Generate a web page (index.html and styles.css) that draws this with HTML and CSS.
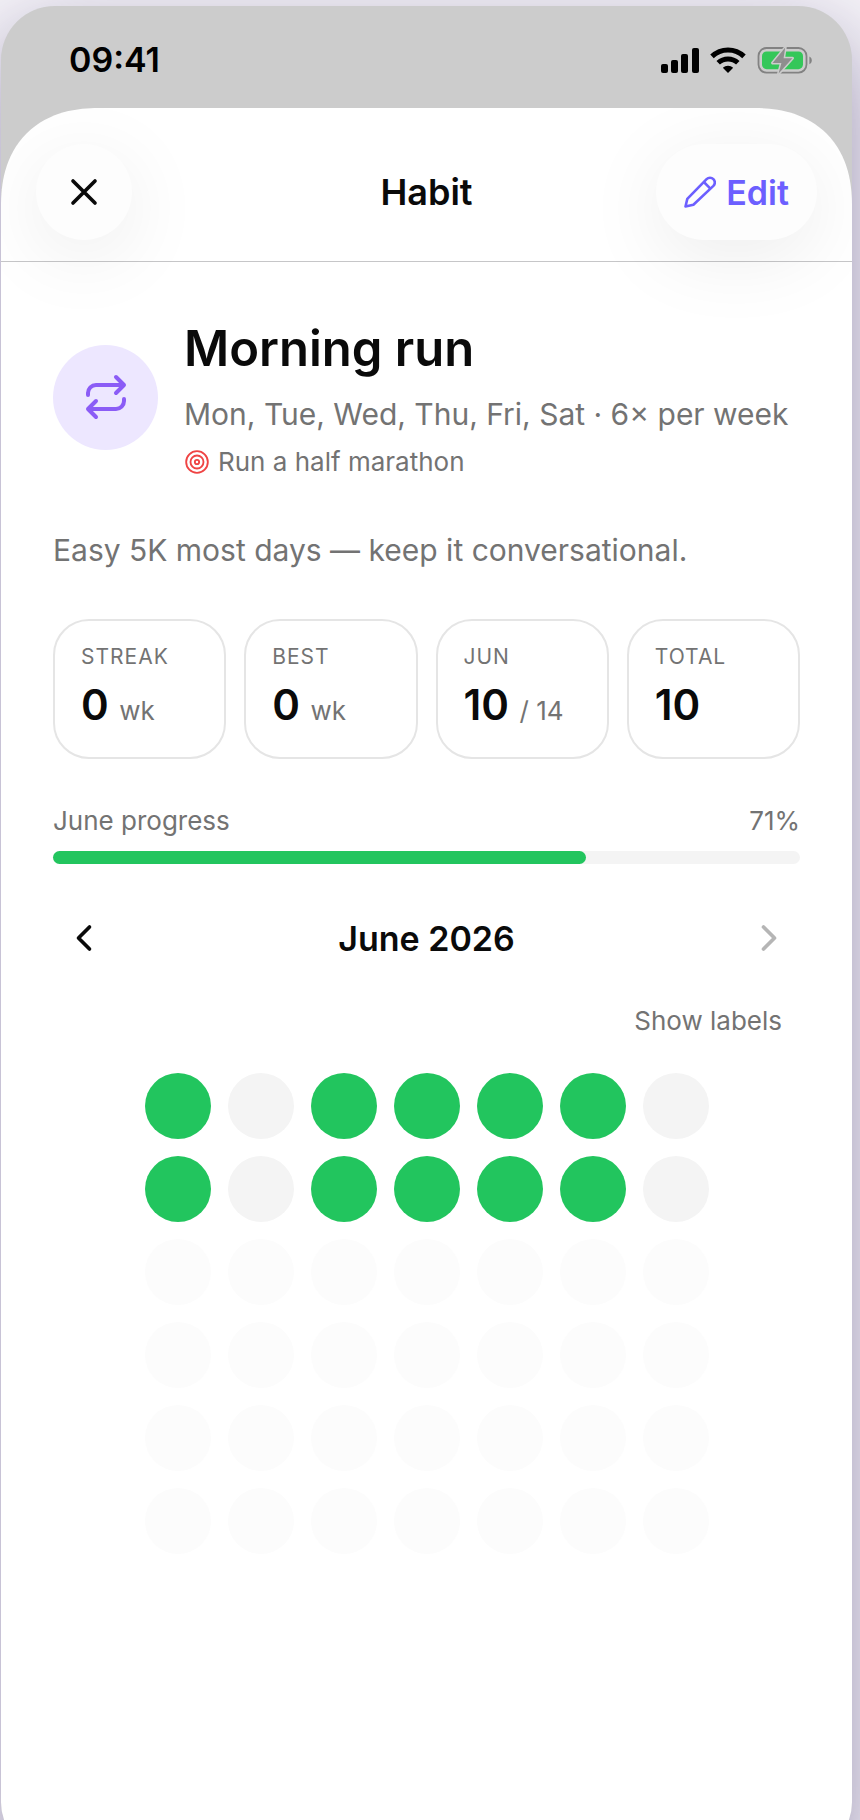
FILE: index.html
```
<!DOCTYPE html>
<html lang="en">
<head>
    <meta charset="UTF-8">
    <meta name="viewport" content="width=device-width, initial-scale=1.0">
    <title>Habit</title>
    <link rel="stylesheet" href="styles.css">
</head>
<body>
    <div class="phone">
        <div class="status-bar">
            <span class="time">09:41</span>
            <div class="status-icons">
                <svg width="38" height="26" viewBox="0 0 38 26" fill="#000">
                    <rect x="0" y="17" width="7" height="9" rx="2"/>
                    <rect x="10" y="13" width="7" height="13" rx="2"/>
                    <rect x="20" y="7" width="7" height="19" rx="2"/>
                    <rect x="31" y="1" width="7" height="25" rx="2"/>
                </svg>
                <svg width="36" height="26" viewBox="0 0 36 26" fill="none" stroke="#000" stroke-width="5">
                    <path d="M2 9.4a23 23 0 0 1 32 0"/>
                    <path d="M8.2 15.8a14.2 14.2 0 0 1 19.6 0"/>
                    <path d="M18 26l-5.2-5.2a7.4 7.4 0 0 1 10.4 0z" fill="#000" stroke="none"/>
                </svg>
                <svg width="56" height="28" viewBox="0 0 56 28">
                    <rect x="1.5" y="2" width="48" height="24.6" rx="8" fill="none" stroke="#828282" stroke-width="1.8"/>
                    <rect x="5" y="5.4" width="41" height="17.8" rx="4.6" fill="#34c759"/>
                    <path d="M52.4 10.5c3.2 1.4 3.2 6.4 0 7.8z" fill="#828282"/>
                    <path d="M28.2 1.6L15.6 17h8.8l-2.8 10.6L35.4 12.2h-8.8z" fill="#8e8e8e" stroke="#ccc" stroke-width="3" stroke-linejoin="round" paint-order="stroke"/>
                </svg>
            </div>
        </div>

        <main class="sheet">
            <header class="header">
                <button class="round-btn close" aria-label="Close">
                    <svg class="icon" viewBox="0 0 24 24"><path d="M18 6 6 18M6 6l12 12"/></svg>
                </button>
                <h1 class="header-title">Habit</h1>
                <button class="round-btn edit">
                    <svg width="32" height="32" viewBox="0 0 32 32" fill="none" stroke="currentColor" stroke-width="2.6" stroke-linejoin="round">
                        <path d="M1.5 30.5 3.3 22.9 22.6 3.1a4.8 4.8 0 0 1 6.8 0a4.8 4.8 0 0 1 0 6.8L9.4 28.8z"/>
                        <path d="M19.8 6l6.6 6.6"/>
                    </svg>
                    <span>Edit</span>
                </button>
            </header>

            <div class="content">
                <section class="habit">
                    <div class="habit-icon">
                        <svg width="48" height="48" viewBox="0 0 24 24">
                            <path d="m17 2 4 4-4 4M3 11v-1a4 4 0 0 1 4-4h14M7 22l-4-4 4-4M21 13v1a4 4 0 0 1-4 4H3"/>
                        </svg>
                    </div>
                    <div class="habit-info">
                        <h2>Morning run</h2>
                        <p class="schedule">Mon, Tue, Wed, Thu, Fri, Sat · 6× per week</p>
                        <p class="goal">
                            <svg width="26" height="26" viewBox="0 0 24 24">
                                <circle cx="12" cy="12" r="10"/>
                                <circle cx="12" cy="12" r="6"/>
                                <circle cx="12" cy="12" r="2"/>
                            </svg>
                            <span>Run a half marathon</span>
                        </p>
                    </div>
                </section>

                <p class="note">Easy 5K most days — keep it conversational.</p>

                <section class="stats">
                    <div class="stat">
                        <div class="stat-label">Streak</div>
                        <div class="stat-value">0 <small>wk</small></div>
                    </div>
                    <div class="stat">
                        <div class="stat-label">Best</div>
                        <div class="stat-value">0 <small>wk</small></div>
                    </div>
                    <div class="stat">
                        <div class="stat-label">Jun</div>
                        <div class="stat-value">10 <small>/ 14</small></div>
                    </div>
                    <div class="stat">
                        <div class="stat-label">Total</div>
                        <div class="stat-value">10</div>
                    </div>
                </section>

                <section class="progress">
                    <div class="progress-text">
                        <span id="progress-label">June progress</span>
                        <span>71%</span>
                    </div>
                    <div class="bar" role="progressbar" aria-labelledby="progress-label" aria-valuenow="71" aria-valuemin="0" aria-valuemax="100">
                        <div class="bar-fill" style="width: 71.4%"></div>
                    </div>
                </section>

                <nav class="month">
                    <button class="month-btn" aria-label="Previous month">
                        <svg class="icon" viewBox="0 0 24 24"><path d="m15 18-6-6 6-6"/></svg>
                    </button>
                    <h3>June 2026</h3>
                    <button class="month-btn" aria-label="Next month" disabled>
                        <svg class="icon" viewBox="0 0 24 24"><path d="m9 18 6-6-6-6"/></svg>
                    </button>
                </nav>

                <button class="labels-btn">Show labels</button>

                <div class="days">
                    <i class="day done"></i><i class="day"></i><i class="day done"></i><i class="day done"></i><i class="day done"></i><i class="day done"></i><i class="day"></i>
                    <i class="day done"></i><i class="day"></i><i class="day done"></i><i class="day done"></i><i class="day done"></i><i class="day done"></i><i class="day"></i>
                    <i class="day future"></i><i class="day future"></i><i class="day future"></i><i class="day future"></i><i class="day future"></i><i class="day future"></i><i class="day future"></i>
                    <i class="day future"></i><i class="day future"></i><i class="day future"></i><i class="day future"></i><i class="day future"></i><i class="day future"></i><i class="day future"></i>
                    <i class="day future"></i><i class="day future"></i><i class="day future"></i><i class="day future"></i><i class="day future"></i><i class="day future"></i><i class="day future"></i>
                    <i class="day future"></i><i class="day future"></i><i class="day future"></i><i class="day future"></i><i class="day future"></i><i class="day future"></i><i class="day future"></i>
                </div>
            </div>
        </main>
    </div>
</body>
</html>
```
FILE: styles.css
```
*,
*::before,
*::after {
    box-sizing: border-box;
}
body {
    height: 100vh;
    margin: 0;
    padding: 6px 8px 0 1px;
    overflow: hidden;
    background-color: #f4f2f7;
    color: #0a0a0a;
    font-family: Inter, "Liberation Sans", sans-serif;
}
h1, h2, h3, p {
    margin: 0;
}
button {
    padding: 0;
    border: none;
    background: none;
    color: inherit;
    font: inherit;
    cursor: pointer;
}
svg {
    display: block;
    flex: none;
}
.icon {
    width: 44px;
    height: 44px;
    fill: none;
    stroke: currentColor;
    stroke-width: 2;
    stroke-linecap: round;
    stroke-linejoin: round;
}
.phone {
    display: flex;
    flex-direction: column;
    min-height: calc(100vh + 30px);
    border-radius: 54px;
    overflow: hidden;
    background-color: #ccc;
    box-shadow: 0 30px 80px rgba(50, 35, 100, 0.45);
}

/* Status bar */
.status-bar {
    display: flex;
    justify-content: space-between;
    align-items: center;
    height: 102px;
    padding: 5px 39px 0 68px;
}
.time {
    color: #000;
    font-size: 34px;
    font-weight: 600;
}
.status-icons {
    display: flex;
    align-items: center;
    gap: 11px;
}

/* Sheet */
.sheet {
    flex: 1;
    border-radius: 86px 86px 0 0;
    overflow: hidden;
    background-color: #fff;
}
@supports (corner-shape: superellipse(1.2)) {
    .sheet {
        border-radius: 98px 98px 0 0;
        corner-shape: superellipse(1.2);
    }
}
.header {
    display: grid;
    grid-template-columns: 1fr auto 1fr;
    align-items: center;
    padding: 36px 35px 21px;
    border-bottom: 1px solid #c6c6c8;
}
.header-title {
    font-size: 36px;
    font-weight: 600;
}
.round-btn {
    display: flex;
    align-items: center;
    justify-content: center;
    height: 96px;
    border-radius: 48px;
    background-color: #fdfdfd;
    box-shadow: 0 16px 80px rgba(0, 0, 0, 0.08);
}
.close {
    width: 96px;
}
.edit {
    justify-self: end;
    gap: 10px;
    padding: 0 28px;
    color: #6c5fff;
    font-size: 34px;
    font-weight: 600;
}
.content {
    padding: 54px 52px;
    color: #737373;
}

/* Habit summary */
.habit {
    display: flex;
    align-items: center;
    gap: 26px;
}
.habit-icon {
    display: flex;
    flex: none;
    align-items: center;
    justify-content: center;
    width: 105px;
    height: 105px;
    border-radius: 50%;
    background-color: #ede7ff;
}
.habit-icon svg {
    fill: none;
    stroke: #8b5cf6;
    stroke-width: 2;
    stroke-linecap: round;
    stroke-linejoin: round;
}
.habit-info {
    display: flex;
    flex-direction: column;
    gap: 12px;
}
.habit-info h2 {
    color: #0a0a0a;
    font-size: 49px;
    font-weight: 600;
    line-height: 66px;
}
.schedule {
    font-size: 30px;
    line-height: 40px;
}
.goal {
    display: flex;
    align-items: center;
    gap: 8px;
    font-size: 26px;
    line-height: 32px;
}
.goal svg {
    fill: none;
    stroke: #ef4444;
    stroke-width: 1.7;
}
.note {
    margin-top: 51px;
    font-size: 30px;
    line-height: 42px;
}

/* Stats */
.stats {
    display: grid;
    grid-template-columns: repeat(4, 1fr);
    gap: 18px;
    margin-top: 48px;
}
.stat {
    display: flex;
    flex-direction: column;
    gap: 12px;
    padding: 26px;
    border: 2px solid #e5e5e5;
    border-radius: 36px;
}
.stat-label {
    font-size: 21px;
    line-height: 20px;
    letter-spacing: 1px;
    text-transform: uppercase;
}
.stat-value {
    color: #0a0a0a;
    font-size: 42px;
    font-weight: 600;
    line-height: 52px;
    white-space: nowrap;
}
.stat-value small {
    color: #737373;
    font-size: 26px;
    font-weight: 400;
    line-height: 26px;
}

/* Progress */
.progress {
    margin-top: 46px;
}
.progress-text {
    display: flex;
    justify-content: space-between;
    margin-bottom: 14px;
    font-size: 26px;
    line-height: 32px;
}
.bar {
    height: 13px;
    border-radius: 7px;
    background-color: #f4f4f4;
}
.bar-fill {
    height: 100%;
    border-radius: 7px;
    background-color: #22c55e;
}

/* Calendar */
.month {
    display: flex;
    align-items: center;
    justify-content: space-between;
    margin-top: 43px;
    color: #0a0a0a;
}
.month h3 {
    font-size: 34px;
    font-weight: 600;
}
.month-btn {
    display: flex;
    align-items: center;
    justify-content: center;
    width: 62px;
    height: 62px;
}
.month-btn:disabled {
    color: #b5b5b5;
    cursor: default;
}
.labels-btn {
    display: block;
    margin: 36px 18px 36px auto;
    font-size: 26px;
    line-height: 32px;
}
.days {
    display: grid;
    grid-template-columns: repeat(7, 66px);
    justify-content: center;
    gap: 17px;
}
.day {
    height: 66px;
    border-radius: 50%;
    background-color: #f4f4f4;
}
.day.done {
    background-color: #22c55e;
}
.day.future {
    background-color: #fcfcfc;
}
```
